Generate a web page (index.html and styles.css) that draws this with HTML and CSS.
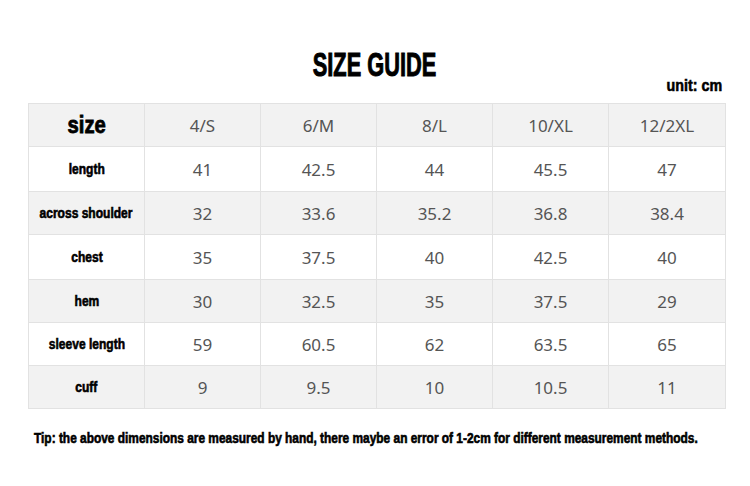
FILE: index.html
```html
<!DOCTYPE html>
<html>
<head>
<meta charset="utf-8">
<link rel="stylesheet" href="styles.css">
</head>
<body>
<div class="page">
  <h1 class="title"><span class="squeeze">SIZE GUIDE</span></h1>
  <div class="unit"><span class="squeeze right">unit: cm</span></div>
  <div class="grid">
    <div class="cell label head"><span class="squeeze size">size</span></div>
    <div class="cell head">4/S</div>
    <div class="cell head">6/M</div>
    <div class="cell head">8/L</div>
    <div class="cell head">10/XL</div>
    <div class="cell head">12/2XL</div>

    <div class="cell label"><span class="squeeze">length</span></div>
    <div class="cell">41</div><div class="cell">42.5</div><div class="cell">44</div><div class="cell">45.5</div><div class="cell">47</div>

    <div class="cell label alt"><span class="squeeze">across shoulder</span></div>
    <div class="cell alt">32</div><div class="cell alt">33.6</div><div class="cell alt">35.2</div><div class="cell alt">36.8</div><div class="cell alt">38.4</div>

    <div class="cell label"><span class="squeeze">chest</span></div>
    <div class="cell">35</div><div class="cell">37.5</div><div class="cell">40</div><div class="cell">42.5</div><div class="cell">40</div>

    <div class="cell label alt"><span class="squeeze">hem</span></div>
    <div class="cell alt">30</div><div class="cell alt">32.5</div><div class="cell alt">35</div><div class="cell alt">37.5</div><div class="cell alt">29</div>

    <div class="cell label"><span class="squeeze">sleeve length</span></div>
    <div class="cell">59</div><div class="cell">60.5</div><div class="cell">62</div><div class="cell">63.5</div><div class="cell">65</div>

    <div class="cell label alt"><span class="squeeze">cuff</span></div>
    <div class="cell alt">9</div><div class="cell alt">9.5</div><div class="cell alt">10</div><div class="cell alt">10.5</div><div class="cell alt">11</div>
  </div>
  <p class="tip"><span class="squeeze left">Tip: the above dimensions are measured by hand, there maybe an error of 1-2cm for different measurement methods.</span></p>
</div>
</body>
</html>
```

FILE: styles.css
```css
html, body {
  margin: 0;
  padding: 0;
  background: #fff;
}

.page {
  width: 750px;
  height: 486px;
  overflow: hidden;
  font-family: "Liberation Sans", Arial, sans-serif;
  color: #000;
}

.squeeze {
  display: inline-block;
  white-space: nowrap;
  font-weight: bold;
  -webkit-text-stroke: 0.6px #000;
}

.title {
  margin: 51px 0 0;
  text-align: center;
  font-size: 33px;
  line-height: 28px;
  font-weight: bold;
}

.title .squeeze {
  transform: scaleX(0.66);
  -webkit-text-stroke: 1px #000;
}

.unit {
  text-align: right;
  padding-right: 28px;
  font-size: 17px;
  line-height: 14px;
}

.unit .squeeze {
  transform: scaleX(0.84);
  transform-origin: right center;
}

.grid {
  margin: 10px 0 0 28px;
  width: 698px;
  height: 306px;
  box-sizing: border-box;
  display: grid;
  grid-template-columns: repeat(5, 115px) 116px;
  grid-template-rows: 42px 44px 42px 44px 42px 42px 42px;
  gap: 1px;
  padding: 1px;
  background: #e2e2e2;
}

.cell {
  background: #fff;
  display: flex;
  align-items: center;
  justify-content: center;
  font-family: "Noto Sans", "Open Sans", sans-serif;
  font-size: 17px;
  color: #555;
}

.cell.head,
.cell.alt {
  background: #f2f2f2;
}

.cell.label {
  font-family: "Liberation Sans", Arial, sans-serif;
  font-size: 14.5px;
  color: #000;
}

.cell.label .squeeze {
  transform: scaleX(0.83);
}

.cell.label .squeeze.size {
  font-size: 23px;
  transform: scaleX(0.88);
  -webkit-text-stroke: 0.8px #000;
}

.tip {
  margin: 21px 0 0;
  padding-left: 34px;
  font-size: 14px;
  line-height: 16px;
}

.tip .squeeze {
  transform: scaleX(0.85);
  transform-origin: left center;
}
```
